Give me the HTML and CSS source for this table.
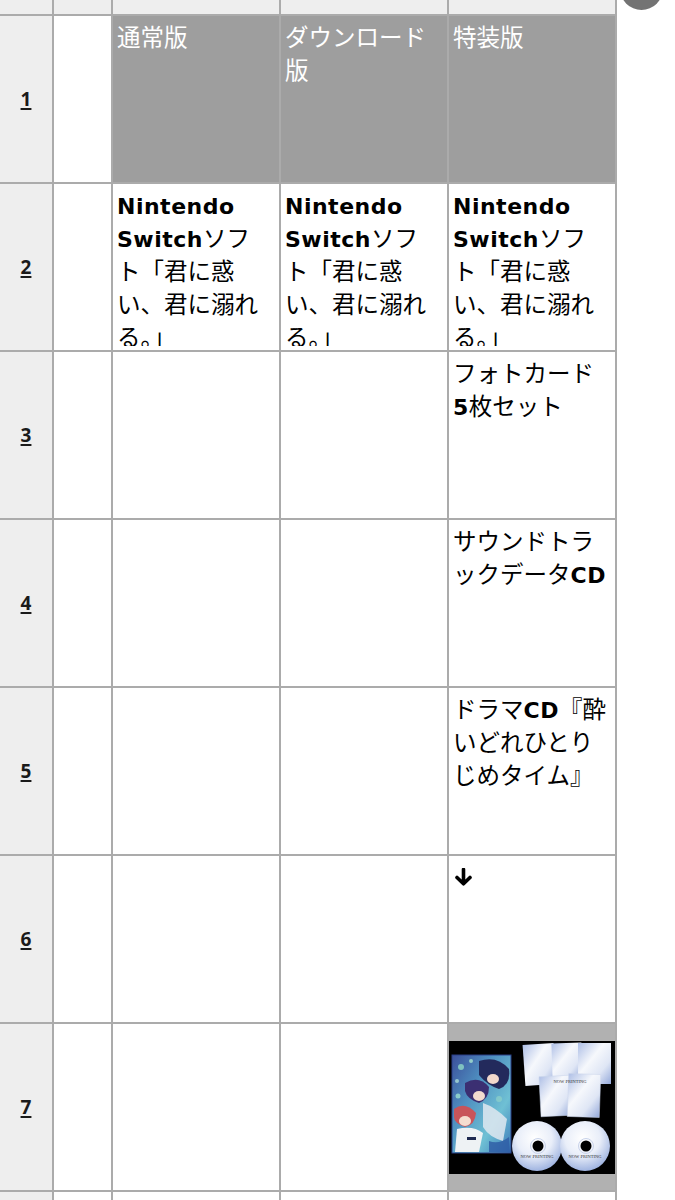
FILE: index.html
```html
<!DOCTYPE html>
<html lang="ja">
<head>
<meta charset="utf-8">
<title>特装版 比較表</title>
<link rel="stylesheet" href="styles.css">
</head>
<body>
<div class="sheet">
  <div class="cell top"></div>
  <div class="cell top"></div>
  <div class="cell top"></div>
  <div class="cell top"></div>
  <div class="cell top"></div>

  <div class="cell rh"><span class="num">1</span></div>
  <div class="cell"></div>
  <div class="cell hdr"><div class="in">通常版</div></div>
  <div class="cell hdr"><div class="in">ダウンロード<br>版</div></div>
  <div class="cell hdr"><div class="in">特装版</div></div>

  <div class="cell rh"><span class="num">2</span></div>
  <div class="cell"></div>
  <div class="cell"><div class="in"><b class="en">Nintendo</b><br><b class="en">Switch</b>ソフ<br>ト「君に惑<br>い、君に溺れ<br>る。」</div></div>
  <div class="cell"><div class="in"><b class="en">Nintendo</b><br><b class="en">Switch</b>ソフ<br>ト「君に惑<br>い、君に溺れ<br>る。」</div></div>
  <div class="cell"><div class="in"><b class="en">Nintendo</b><br><b class="en">Switch</b>ソフ<br>ト「君に惑<br>い、君に溺れ<br>る。」</div></div>

  <div class="cell rh"><span class="num">3</span></div>
  <div class="cell"></div>
  <div class="cell"></div>
  <div class="cell"></div>
  <div class="cell"><div class="in">フォトカード<br><b class="en">5</b>枚セット</div></div>

  <div class="cell rh"><span class="num">4</span></div>
  <div class="cell"></div>
  <div class="cell"></div>
  <div class="cell"></div>
  <div class="cell"><div class="in">サウンドトラ<br>ックデータ<b class="en">CD</b></div></div>

  <div class="cell rh"><span class="num">5</span></div>
  <div class="cell"></div>
  <div class="cell"></div>
  <div class="cell"></div>
  <div class="cell"><div class="in">ドラマ<b class="en">CD</b>『酔<br>いどれひとり<br>じめタイム』</div></div>

  <div class="cell rh"><span class="num">6</span></div>
  <div class="cell"></div>
  <div class="cell"></div>
  <div class="cell"></div>
  <div class="cell"><div class="in"><svg class="arrow" width="17" height="18" viewBox="0 0 17 18" role="img" aria-label="↓" xmlns="http://www.w3.org/2000/svg"><path d="M8.5 1.5 V15.5 M2 9.5 L8.5 15.8 L15 9.5" fill="none" stroke="#000" stroke-width="3.6" stroke-linecap="round" stroke-linejoin="round"/></svg></div></div>

  <div class="cell rh"><span class="num">7</span></div>
  <div class="cell"></div>
  <div class="cell"></div>
  <div class="cell"></div>
  <div class="cell imgcell">
    <svg class="pic" width="166" height="133" viewBox="0 0 166 133" xmlns="http://www.w3.org/2000/svg">
      <defs>
        <linearGradient id="pbg" x1="0" y1="0" x2="1" y2="1">
          <stop offset="0" stop-color="#3b4f9a"/>
          <stop offset="0.35" stop-color="#4e8fc0"/>
          <stop offset="0.7" stop-color="#6fc0d4"/>
          <stop offset="1" stop-color="#3a78b8"/>
        </linearGradient>
        <linearGradient id="card" x1="0" y1="0" x2="1" y2="1">
          <stop offset="0" stop-color="#aebfe6"/>
          <stop offset="0.4" stop-color="#f6f8fc"/>
          <stop offset="0.7" stop-color="#dfe6f5"/>
          <stop offset="1" stop-color="#94a9da"/>
        </linearGradient>
        <radialGradient id="disc" cx="0.45" cy="0.35" r="0.7">
          <stop offset="0" stop-color="#ffffff"/>
          <stop offset="0.5" stop-color="#e9eef9"/>
          <stop offset="1" stop-color="#93aadc"/>
        </radialGradient>
      </defs>
      <rect width="166" height="133" fill="#000"/>
      <!-- poster -->
      <rect x="3" y="14" width="59" height="98" fill="url(#pbg)"/>
      <rect x="3" y="14" width="59" height="98" fill="none" stroke="#2a3f86" stroke-width="1"/>
      <circle cx="12" cy="26" r="3" fill="#8fd8c6" opacity="0.8"/>
      <circle cx="22" cy="20" r="2" fill="#a6e3d0" opacity="0.8"/>
      <circle cx="50" cy="58" r="3" fill="#8ed1c9" opacity="0.7"/>
      <circle cx="9" cy="55" r="2.5" fill="#9be0cf" opacity="0.8"/>
      <circle cx="8" cy="40" r="2" fill="#b8ecdc" opacity="0.7"/>
      <path d="M30 20 Q48 14 60 28 Q62 44 50 48 Q38 44 30 34 Z" fill="#232a5c"/>
      <ellipse cx="44" cy="38" rx="6" ry="5" fill="#f1d8cc"/>
      <path d="M16 42 Q30 34 40 46 Q40 58 30 62 Q18 58 16 50 Z" fill="#3b2f72"/>
      <ellipse cx="30" cy="55" rx="6" ry="5" fill="#f3dccf"/>
      <path d="M5 68 Q16 60 27 72 Q26 84 16 86 Q5 82 5 76 Z" fill="#c8545a"/>
      <ellipse cx="16" cy="80" rx="6" ry="5" fill="#f5ddd0"/>
      <path d="M8 88 Q24 84 34 92 L30 111 L6 111 Z" fill="#eef2f4"/>
      <path d="M34 62 Q46 66 58 78 L54 100 Q40 96 34 86 Z" fill="#dfe8f0" opacity="0.85"/>
      <rect x="18" y="96" width="9" height="3" fill="#1f2a50"/>
      <path d="M40 100 Q50 104 60 96 L61 111 L40 111 Z" fill="#2d5aa4" opacity="0.8"/>
      <!-- cards -->
      <g transform="rotate(-4 90 24)"><rect x="75" y="3" width="31" height="41" fill="url(#card)"/></g>
      <g transform="rotate(-2 118 20)"><rect x="103" y="2" width="30" height="36" fill="url(#card)"/></g>
      <rect x="129" y="2" width="33" height="41" fill="url(#card)"/>
      <g transform="rotate(-3 106 55)"><rect x="91" y="35" width="31" height="40" fill="url(#card)" stroke="#c9d3ea" stroke-width="0.5"/></g>
      <g transform="rotate(2 135 55)"><rect x="119" y="33" width="32" height="43" fill="url(#card)" stroke="#c9d3ea" stroke-width="0.5"/></g>
      <text x="121" y="42" class="np">NOW PRINTING</text>
      <!-- discs -->
      <circle cx="88" cy="105" r="25" fill="url(#disc)"/>
      <circle cx="89" cy="105" r="5.5" fill="#000"/>
      <circle cx="89" cy="105" r="7.5" fill="none" stroke="#c8d2ea" stroke-width="1"/>
      <text x="88" y="117" class="np">NOW PRINTING</text>
      <circle cx="136" cy="105" r="25" fill="url(#disc)"/>
      <circle cx="137" cy="105" r="5.5" fill="#000"/>
      <circle cx="137" cy="105" r="7.5" fill="none" stroke="#c8d2ea" stroke-width="1"/>
      <text x="136" y="117" class="np">NOW PRINTING</text>
    </svg>
  </div>

  <div class="cell rh"><span class="num">8</span></div>
  <div class="cell"></div>
  <div class="cell"></div>
  <div class="cell"></div>
  <div class="cell"></div>
</div>
<div class="totop" aria-hidden="true"></div>
</body>
</html>
```

FILE: styles.css
```css
html, body {
  margin: 0;
  padding: 0;
  background: #ffffff;
}

body {
  font-family: "Noto Sans CJK JP", "Noto Sans", sans-serif;
  color: #000;
  overflow: hidden;
}

.sheet {
  display: grid;
  grid-template-columns: 52px 57px 166px 166px 166px;
  grid-template-rows: 14px repeat(8, 166px);
  gap: 2px;
  padding-right: 2px;
  width: max-content;
  background: #ababab;
}

.cell {
  background: #ffffff;
  overflow: hidden;
  padding: 4px 4px 4px 4px;
  font-size: 23.5px;
  line-height: 33px;
  white-space: nowrap;
  box-sizing: border-box;
}

.in {
  height: 100%;
  overflow: hidden;
}

.top {
  background: #eeeeee;
}

.rh {
  background: #eeeeee;
  display: flex;
  align-items: center;
  justify-content: center;
  padding: 0;
}

.num {
  font-family: "Open Sans", "Liberation Sans", sans-serif;
  font-weight: 700;
  font-size: 19px;
  line-height: 1;
  color: #1a1a1a;
  text-decoration: underline;
  text-decoration-thickness: 2px;
  text-underline-offset: 2px;
}

.hdr {
  background: #9e9e9e;
  color: #ffffff;
}

.en {
  font-family: "DejaVu Sans", "Liberation Sans", sans-serif;
  font-weight: 700;
  font-size: 22px;
  line-height: 1;
  letter-spacing: 0.5px;
}

.arrow {
  display: block;
  margin: 8px 0 0 2px;
}

.imgcell {
  background: #b1b1b1;
  padding: 0;
  display: flex;
  align-items: center;
}

.pic {
  display: block;
}

.np {
  font-family: "Liberation Serif", serif;
  font-size: 4.5px;
  fill: #333;
  text-anchor: middle;
}

.totop {
  position: fixed;
  top: -33px;
  left: 620px;
  width: 43px;
  height: 43px;
  border-radius: 50%;
  background: #737373;
}

.totop::after {
  content: "";
  position: absolute;
  left: 20px;
  top: 28px;
  width: 3px;
  height: 5px;
  background: #ffffff;
  border-radius: 1px;
}
```
